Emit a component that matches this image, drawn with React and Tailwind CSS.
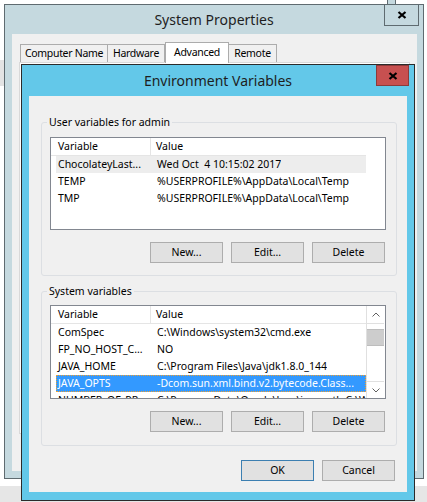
import React from "react";

const userVars = [
  { name: "ChocolateyLast...", value: "Wed Oct  4 10:15:02 2017" },
  { name: "TEMP", value: "%USERPROFILE%\\AppData\\Local\\Temp" },
  { name: "TMP", value: "%USERPROFILE%\\AppData\\Local\\Temp" },
];

const systemVars = [
  { name: "ComSpec", value: "C:\\Windows\\system32\\cmd.exe" },
  { name: "FP_NO_HOST_C...", value: "NO" },
  { name: "JAVA_HOME", value: "C:\\Program Files\\Java\\jdk1.8.0_144" },
  { name: "JAVA_OPTS", value: "-Dcom.sun.xml.bind.v2.bytecode.Class..." },
  { name: "NUMBER_OF_PR...", value: "C:\\ProgramData\\Oracle\\Java\\javapath;C:\\Windows" },
];

const CloseGlyph = () => (
  <svg width="10" height="8" viewBox="0 0 10 8">
    <path d="M1.5 1 L8.5 7 M8.5 1 L1.5 7" stroke="#000" strokeWidth="2.2" />
  </svg>
);

const Button = ({ children, primary }) => (
  <button
    className={`h-[21px] w-[73px] border ${
      primary ? "border-[#3c7fb1]" : "border-[#adadad]"
    } bg-[#e1e1e1] text-[10.5px] leading-none text-black`}
  >
    {children}
  </button>
);

const Chevron = ({ up }) => (
  <svg width="8" height="5" viewBox="0 0 8 5">
    <path
      d={up ? "M0.5 4.5 L4 1 L7.5 4.5" : "M0.5 0.5 L4 4 L7.5 0.5"}
      stroke="#606060"
      strokeWidth="1"
      fill="none"
    />
  </svg>
);

const VarList = ({ rows, height, selected, activeSelection, scrollbar }) => (
  <div className={`ml-[8px] flex w-[336px] overflow-hidden border border-[#828790] bg-white ${height}`}>
    <div className="w-[315px] shrink-0">
      <div className="flex h-[18px] items-center border-b border-[#e5e5e5]">
        <div className="flex h-full w-[100px] items-center border-r border-[#e5e5e5] pl-[7px]">
          Variable
        </div>
        <div className="pl-[5px]">Value</div>
      </div>
      {rows.map((row, i) => {
        const isSel = i === selected;
        let rowClass = "";
        if (isSel && activeSelection) {
          rowClass =
            "bg-[#3399ff] text-white outline-1 outline-dotted outline-[#f0a030] -outline-offset-1";
        } else if (isSel) {
          rowClass = "bg-[#ededed]";
        }
        return (
          <div
            key={row.name}
            className={`ml-[5px] flex h-[17px] items-center whitespace-pre ${rowClass}`}
          >
            <div className="w-[95px] shrink-0 overflow-hidden pl-[2px]">{row.name}</div>
            <div className="overflow-hidden pl-[6px]">{row.value}</div>
          </div>
        );
      })}
    </div>
    {scrollbar && (
      <div className="flex w-[18px] flex-col border-l border-[#e0e0e0] bg-white">
        <div className="flex h-[18px] items-center justify-center border-b border-[#e0e0e0]">
          <Chevron up />
        </div>
        <div className="mt-[5px] h-[17px] border-y border-[#bdbdbd] bg-[#cdcdcd]" />
        <div className="flex-1" />
        <div className="flex h-[17px] items-center justify-center border-t border-[#e0e0e0]">
          <Chevron />
        </div>
      </div>
    )}
  </div>
);

const GroupBox = ({ label, children, className }) => (
  <fieldset
    className={`mx-[12px] w-[356px] rounded-[3px] border border-[#dcdfe3] ${className}`}
  >
    <legend className="ml-[5px] px-[2px] leading-[16px]">{label}</legend>
    {children}
  </fieldset>
);

export default function App() {
  return (
    <div className="relative h-[502px] w-[427px] overflow-hidden bg-white font-['Noto_Sans',sans-serif] text-[10.5px] text-black">
      {/* desktop bits behind the windows */}
      <div className="absolute left-0 top-[60px] h-[26px] w-[4px] bg-[#e3e3e3]" />
      <div className="absolute left-0 top-[486px] h-[16px] w-full bg-[#e6e6e6]" />
      <div className="absolute left-[387px] top-0 h-[5px] w-[9px] border-x border-[#5f6b70] bg-[#c5d9df]" />

      {/* System Properties */}
      <div className="absolute left-[4px] top-[4px] h-[475px] w-[420px] border border-[#5f6b70] bg-[#c5d9df]">
        <div className="flex h-[29px] items-center justify-center text-[14px] text-[#1e1e1e]">
          System Properties
        </div>
        <button className="absolute -top-px right-[4px] flex h-[22px] w-[35px] items-center justify-center border border-[#5f6b70] bg-[#c5d9df]">
          <CloseGlyph />
        </button>
        <div className="ml-[7px] h-[437px] w-[405px] bg-[#f0f0f0] pt-[8px]">
          <div className="relative z-10 flex h-[21px] items-end pl-[8px] tracking-[-0.3px]">
            <div className="mb-px flex h-[18px] w-[88px] items-center justify-center border border-b-0 border-[#acacac]">
              Computer Name
            </div>
            <div className="-ml-px mb-px flex h-[18px] w-[58px] items-center justify-center border border-b-0 border-[#acacac]">
              Hardware
            </div>
            <div className="flex h-[21px] w-[64px] items-start justify-center border border-b-0 border-[#acacac] bg-white pt-[2px]">
              Advanced
            </div>
            <div className="-ml-px mb-px flex h-[18px] w-[49px] items-center justify-center border border-b-0 border-[#acacac]">
              Remote
            </div>
          </div>
          <div className="-mt-px ml-[7px] h-[372px] w-[391px] border border-[#d9d9d9] bg-white" />
        </div>
      </div>

      {/* Environment Variables */}
      <div className="absolute left-[21px] top-[64px] h-[437px] w-[394px] border border-[#2b2b2b] bg-[#63c8e9]">
        <div className="flex h-[31px] items-center justify-center text-[14px] text-[#1e1e1e]">
          Environment Variables
        </div>
        <button className="absolute right-[5px] top-0 flex h-[21px] w-[33px] items-center justify-center border border-[#8c3a3a] bg-[#c75050]">
          <CloseGlyph />
        </button>
        <div className="ml-[7px] flex h-[396px] w-[378px] flex-col bg-[#f0f0f0]">
          <GroupBox label="User variables for admin" className="mt-[18px]">
            <div className="mt-[7px]">
              <VarList rows={userVars} height="h-[93px]" selected={0} />
            </div>
            <div className="mt-[12px] flex justify-end gap-[8px] pb-[12px] pr-[11px]">
              <Button>New...</Button>
              <Button>Edit...</Button>
              <Button>Delete</Button>
            </div>
          </GroupBox>
          <GroupBox label="System variables" className="mt-[7px]">
            <div className="mt-[6px]">
              <VarList
                rows={systemVars}
                height="h-[94px]"
                selected={3}
                activeSelection
                scrollbar
              />
            </div>
            <div className="mt-[12px] flex justify-end gap-[8px] pb-[13px] pr-[11px]">
              <Button>New...</Button>
              <Button>Edit...</Button>
              <Button>Delete</Button>
            </div>
          </GroupBox>
          <div className="mr-[12px] mt-[14px] flex justify-end gap-[8px]">
            <Button primary>OK</Button>
            <Button>Cancel</Button>
          </div>
        </div>
      </div>
    </div>
  );
}
